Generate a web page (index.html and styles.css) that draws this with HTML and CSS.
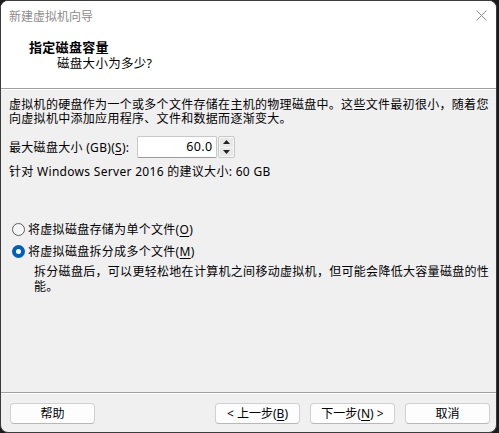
FILE: index.html
```html
<!DOCTYPE html>
<html lang="zh-CN">
<head>
  <meta charset="UTF-8" />
  <title>新建虚拟机向导</title>
  <link rel="stylesheet" href="styles.css">
</head>
<body>
  <div class="window">
    <!-- Cabecera blanca -->
    <div class="top">
      <div class="titlebar">
        <span class="title">新建虚拟机向导</span>
        <svg class="close" width="11" height="11" viewBox="0 0 11 11">
          <path d="M0.5 0.5 L10.5 10.5 M10.5 0.5 L0.5 10.5" stroke="#8a8a8a" stroke-width="1" fill="none"/>
        </svg>
      </div>
      <div class="header">
        <h1>指定磁盘容量</h1>
        <p>磁盘大小为多少?</p>
      </div>
    </div>

    <!-- Contenido -->
    <div class="content">
      <div class="intro">
        <div class="line">虚拟机的硬盘作为一个或多个文件存储在主机的物理磁盘中。这些文件最初很小，随着您</div>
        <div class="line">向虚拟机中添加应用程序、文件和数据而逐渐变大。</div>
      </div>

      <div class="size-row">
        <span>最大磁盘大小 (GB)(<u>S</u>):</span>
        <div class="spin">
          <div class="spin-value">60.0</div>
          <div class="spin-btns">
            <div class="spin-btn">
              <svg width="7" height="4" viewBox="0 0 7 4"><path d="M3.5 0 L7 4 L0 4 Z" fill="#222"/></svg>
            </div>
            <div class="spin-btn">
              <svg width="7" height="4" viewBox="0 0 7 4"><path d="M0 0 L7 0 L3.5 4 Z" fill="#222"/></svg>
            </div>
          </div>
        </div>
      </div>

      <p class="hint">针对 Windows Server 2016 的建议大小: 60 GB</p>

      <div class="radio first">
        <span class="dot"></span>
        <span>将虚拟磁盘存储为单个文件(<u>O</u>)</span>
      </div>
      <div class="radio">
        <span class="dot checked"></span>
        <span>将虚拟磁盘拆分成多个文件(<u>M</u>)</span>
      </div>
      <div class="desc">
        <div class="line">拆分磁盘后，可以更轻松地在计算机之间移动虚拟机，但可能会降低大容量磁盘的性</div>
        <div class="line">能。</div>
      </div>
    </div>

    <!-- Botones -->
    <div class="footer">
      <button class="btn">帮助</button>
      <div class="nav">
        <button class="btn">&lt; 上一步(<u>B</u>)</button>
        <button class="btn">下一步(<u>N</u>) &gt;</button>
        <button class="btn cancel">取消</button>
      </div>
    </div>
  </div>
</body>
</html>
```

FILE: styles.css
```css
* {
  margin: 0;
  padding: 0;
  box-sizing: border-box;
}

html, body {
  width: 499px;
  height: 433px;
  background: #1c1c1c;
  overflow: hidden;
}

body {
  font-family: "Noto Sans", "Noto Sans CJK SC", sans-serif;
  font-size: 12px;
  color: #000;
}

.window {
  width: 497px;
  height: 433px;
  border: 1px solid #3c3c3c;
  border-radius: 8px;
  background: #f0f0f0;
  overflow: hidden;
  display: flex;
  flex-direction: column;
}

u {
  text-decoration: underline;
  text-underline-offset: 2px;
}

/* cabecera */
.top {
  background: #fff;
  height: 88px;
  border-bottom: 1px solid #a0a0a0;
  box-shadow: 0 1px 0 #fff;
}

.titlebar {
  height: 29px;
  display: flex;
  align-items: center;
  justify-content: space-between;
  padding: 0 9px 0 8px;
}

.title {
  color: #8c8c8c;
  font-size: 12px;
}

.close {
  margin-top: -1px;
}

.header {
  padding-left: 28px;
}

.header h1 {
  font-size: 13px;
  font-weight: bold;
  line-height: 16px;
  margin-top: 9px;
  letter-spacing: 0.3px;
}

.header p {
  font-size: 12.5px;
  line-height: 16px;
  margin-top: 1px;
  padding-left: 28px;
  letter-spacing: 0.3px;
}

/* contenido */
.content {
  flex: 1;
  padding: 0 0 0 8px;
  letter-spacing: 0.3px;
}

.line {
  height: 14px;
  line-height: 14px;
}

.intro {
  margin-top: 9px;
}

.size-row {
  display: flex;
  align-items: center;
  height: 22px;
  margin-top: 10px;
}

.spin {
  display: flex;
  margin-left: 8px;
  height: 22px;
}

.spin-value {
  width: 80px;
  height: 22px;
  background: #fff;
  border: 1px solid #c8c8c8;
  border-bottom-color: #9a9a9a;
  border-radius: 2px;
  text-align: right;
  line-height: 20px;
  padding-right: 4px;
  font-size: 12.5px;
}

.spin-btns {
  width: 17px;
  height: 22px;
  display: flex;
  flex-direction: column;
  gap: 1px;
  padding: 1px;
  border: 1px solid #c8c8c8;
  border-radius: 2px;
  background: #f6f6f6;
  margin-left: 1px;
}

.spin-btn {
  flex: 1;
  display: flex;
  align-items: center;
  justify-content: center;
  background: #e8e8e8;
}

.hint {
  line-height: 14px;
  margin-top: 7px;
}

.radio {
  display: flex;
  align-items: center;
  gap: 3px;
  height: 16px;
  margin-top: 6px;
  padding-left: 3px;
}

.radio.first {
  margin-top: 42px;
}

.dot {
  width: 13px;
  height: 13px;
  border-radius: 50%;
  border: 1px solid #5f5f5f;
  background: #f6f6f6;
}

.dot.checked {
  border: none;
  background: #005fb8;
  position: relative;
}

.dot.checked::after {
  content: "";
  position: absolute;
  left: 4px;
  top: 4px;
  width: 5px;
  height: 5px;
  border-radius: 50%;
  background: #fff;
}

.desc {
  margin-top: 5px;
  padding-left: 25px;
}

.desc .line {
  height: 15px;
  line-height: 15px;
}

/* botones */
.footer {
  height: 40px;
  border-top: 1px solid #a0a0a0;
  box-shadow: inset 0 1px 0 #fff;
  display: flex;
  justify-content: space-between;
  padding: 10px 6px 0 9px;
}

.nav {
  display: flex;
  gap: 10px;
}

.btn {
  width: 85px;
  height: 21px;
  background: #fdfdfd;
  border: 1px solid #d0d0d0;
  border-bottom-color: #b8b8b8;
  border-radius: 4px;
  font-family: "Noto Sans", "Noto Sans CJK SC", sans-serif;
  font-size: 12px;
  color: #000;
  line-height: 18px;
}
```
